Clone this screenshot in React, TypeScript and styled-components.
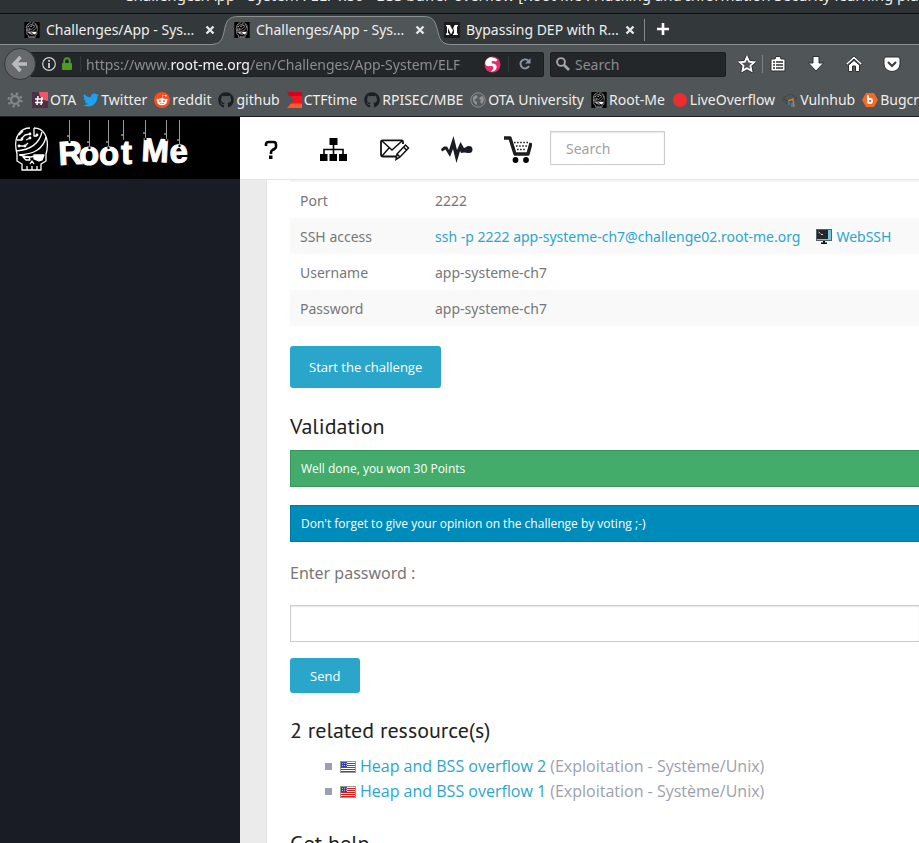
import React from "react";
import styled, { createGlobalStyle, css } from "styled-components";
import { FaTwitter, FaGithub, FaRedditAlien } from "react-icons/fa";

const GlobalStyle = createGlobalStyle`
  * { box-sizing: border-box; }
  html, body { margin: 0; }
  body { font-family: "Open Sans", "Noto Sans", sans-serif; background: #fff; }
  svg { display: block; flex: none; }
  button, input { font: inherit; margin: 0; }
  a { text-decoration: none; }
`;

const Window = styled.div`
  display: flex;
  flex-direction: column;
  height: 100vh;
  overflow: hidden;
`;

const Chrome = styled.header`
  flex: none;
  font-family: "Noto Sans", sans-serif;
  font-size: 14px;
  color: #eeeeec;
  background: #505557;
  border-bottom: 1px solid #1c2022;
`;

const TitleBar = styled.div`
  display: flex;
  align-items: flex-end;
  height: 14px;
  padding-left: 124px;
  overflow: hidden;
  white-space: nowrap;
  font-size: 15px;
  line-height: 36px;
  background: #2d3235;
  border-bottom: 1px solid #0d0f10;
`;

const TabStrip = styled.div`
  display: flex;
  height: 31px;
  padding-left: 15px;
  background: #33393b;
  border-bottom: 1px solid #8b9090;
`;

const Tab = styled.div<{ $active?: boolean; $divider?: boolean }>`
  position: relative;
  display: flex;
  align-items: center;
  gap: 6px;
  width: 210px;
  height: 31px;
  padding: 0 10px 0 9px;
  ${(p) => p.$active && css`z-index: 1;`}
  ${(p) =>
    p.$divider &&
    css`
      &::after {
        content: "";
        position: absolute;
        right: 0;
        top: 5px;
        height: 22px;
        width: 1px;
        background: #85898a;
      }
    `}
`;

const TabShape = styled.svg`
  position: absolute;
  left: -14px;
  top: 0;
  z-index: -1;
`;

const TabLabel = styled.span`
  flex: 1;
  overflow: hidden;
  white-space: nowrap;
`;

const IconButton = styled.button`
  display: flex;
  align-items: center;
  justify-content: center;
  padding: 0;
  border: 0;
  background: none;
  color: inherit;
`;

const NewTab = styled(IconButton)`
  width: 36px;
`;

const NavBar = styled.div`
  display: flex;
  align-items: center;
  height: 38px;
  padding: 0 18px 0 4px;
`;

const BackButton = styled(IconButton)`
  position: relative;
  z-index: 1;
  width: 32px;
  height: 32px;
  margin-right: -6px;
  border-radius: 50%;
  background: #666a6c;
  border: 1px solid #33383a;
  flex: none;
`;

const Field = styled.div`
  display: flex;
  align-items: center;
  height: 25px;
  background: #23272a;
  border: 1px solid #1b1e20;
  border-radius: 2px;
`;

const UrlField = styled(Field)`
  flex: 1;
  min-width: 0;
  padding: 0 11px;
  gap: 5px;
`;

const UrlText = styled.div`
  flex: 1;
  min-width: 0;
  overflow: hidden;
  white-space: nowrap;
  color: #8b8d8e;
  margin-right: 17px;
  mask-image: linear-gradient(to right, #000 calc(100% - 4px), transparent);

  strong {
    font-weight: 400;
    color: #f4f4f4;
  }
`;

const FieldDivider = styled.span`
  width: 1px;
  height: 16px;
  background: #34393b;
  margin: 0 0 0 2px;
`;

const ReloadButton = styled(IconButton)`
  margin-left: 4px;
`;

const BrowserSearch = styled(Field)`
  width: 176px;
  margin: 0 12px 0 6px;
  padding-left: 5px;
  gap: 5px;

  input {
    width: 100%;
    min-width: 0;
    padding: 0;
    border: 0;
    outline: 0;
    background: none;
    color: #eee;
  }
  input::placeholder {
    color: #8b8d8e;
    opacity: 1;
  }
`;

const Tools = styled.div`
  display: flex;
  align-items: center;
  gap: 20px;
`;

const StarGroup = styled.div`
  display: flex;
  align-items: center;
  gap: 6px;
`;

const ToolDivider = styled.span`
  width: 1px;
  height: 18px;
  background: #7f8384;
`;

const Bookmarks = styled.nav`
  display: flex;
  align-items: center;
  gap: 7px;
  height: 33px;
  padding-left: 7px;
  overflow: hidden;
`;

const BookmarksMenu = styled(IconButton)`
  margin-right: 2px;
`;

const Bookmark = styled.a`
  display: flex;
  align-items: center;
  gap: 2px;
  flex: none;
  color: #eeeeec;
  white-space: nowrap;
`;

const Page = styled.div`
  display: flex;
  flex: 1;
  min-height: 0;
`;

const Sidebar = styled.aside`
  flex: none;
  width: 240px;
  background: #191c25;
`;

const LogoLink = styled.a`
  display: block;
  height: 62px;
  background: #000;
`;

const Main = styled.div`
  display: flex;
  flex-direction: column;
  flex: 1;
  min-width: 0;
`;

const SiteHeader = styled.div`
  display: flex;
  align-items: center;
  flex: none;
  height: 63px;
  padding-left: 12px;
  background: #fff;
  border-bottom: 1px solid #e4e4e4;
`;

const SiteLink = styled.a<{ $width: number }>`
  display: flex;
  justify-content: center;
  align-items: center;
  width: ${(p) => p.$width}px;
  height: 36px;
  margin-top: 3px;
`;

const SiteSearch = styled.input`
  width: 115px;
  height: 34px;
  margin-left: 14px;
  padding: 0 15px;
  font-family: "Noto Sans", sans-serif;
  font-size: 14px;
  border: 1px solid #ccc;
  box-shadow: inset 0 1px 2px rgba(0, 0, 0, 0.1);
  background: #fff;

  &::placeholder {
    color: #a2a2a2;
    opacity: 1;
  }
`;

const Body = styled.main`
  flex: 1;
  min-height: 0;
  border-left: 26px solid #ebebeb;
  overflow: hidden;
`;

const Content = styled.div`
  padding-left: 23px;
  border-left: 1px solid #e2e2e2;
`;

const InfoTable = styled.table`
  width: 100%;
  border-collapse: separate;
  border-spacing: 0;
  border-top: 2px solid #f5f5f5;
  font-family: "Noto Sans", sans-serif;
  font-size: 14px;
  color: #777;

  tr:nth-child(even) {
    background: #f9f9f9;
  }
  th,
  td {
    height: 36px;
    padding: 0 10px;
    text-align: left;
    font-weight: 400;
    white-space: nowrap;
  }
  th {
    width: 135px;
  }
`;

const CellLinks = styled.div`
  display: flex;
  align-items: center;
  gap: 16px;
`;

const Link = styled.a`
  display: inline-flex;
  align-items: center;
  gap: 4px;
  color: #2ba6cb;
`;

const Button = styled.button<{ $large?: boolean }>`
  display: block;
  height: ${(p) => (p.$large ? 42 : 35)}px;
  margin: ${(p) => (p.$large ? "20px 0 23px" : "16px 0 0")};
  padding: 0 ${(p) => (p.$large ? 19 : 20)}px;
  border: 0;
  border-radius: 3px;
  background: #2ba6cb;
  color: #fff;
  font-size: 13px;
`;

const Heading = styled.h3`
  margin: 22px 0 9px;
  font-family: "PT Sans", "Noto Sans", sans-serif;
  font-size: 22px;
  line-height: 30px;
  font-weight: 400;
  color: #222;
`;

const Alert = styled.div<{ $tone: "success" | "info" }>`
  height: 37px;
  margin-bottom: 18px;
  padding: 0 10px;
  font-size: 12px;
  line-height: 35px;
  color: #fff;
  background: ${(p) => (p.$tone === "success" ? "#43ac6a" : "#008cba")};
  border: 1px solid ${(p) => (p.$tone === "success" ? "#3a945b" : "#0078a0")};
  border-right: 0;
`;

const PasswordLabel = styled.label`
  display: block;
  padding-top: 1px;
  margin-bottom: 19px;
  font-family: "Noto Sans", sans-serif;
  font-size: 16px;
  line-height: 25px;
  color: #777;
`;

const PasswordInput = styled.input`
  display: block;
  width: 100%;
  height: 37px;
  padding: 0 8px;
  border: 1px solid #ccc;
  border-right: 0;
  box-shadow: inset 0 1px 2px rgba(0, 0, 0, 0.1);
`;

const Resources = styled.ul`
  margin: 0 0 24px;
  padding: 0 0 0 35px;
  list-style: none;
  font-size: 16px;
  line-height: 25px;
  color: #9c9fae;

  li {
    display: flex;
    align-items: center;
    gap: 4px;
    white-space: nowrap;
  }
  li::before {
    content: "";
    width: 7px;
    height: 7px;
    margin-right: 4px;
    background: #9c9fb0;
  }
`;

const SkullArt = () => (
  <g fill="none" stroke="#fff" strokeWidth="1.3" strokeLinejoin="round">
    <path d="M15 1C6 1-1 9 1 22l1 5v7l5 3v6h19v-6l5-3v-7l1-4C34 9 28 1 19 1" />
    <path d="M1 24C14 23 24 18 27 5M4 28C18 27 28 23 31 10" />
    <path d="M4 8l4-4M15 7l-5 1-3 3M4 19h6M11 13l4-2M10 19l3-3M19 1v8h3M2 13h5" />
    <path d="M5 28l7 2h4l4-1h8" strokeWidth="1.600" />
    <path d="M19 28h10l-2 5-3 1-5-2z" fill="#fff" />
    <path d="M8 30h6l1 3h-4z" />
    <path d="M15 37l2-3 2 3M12 43v-4M17 43v-4M22 43v-4" />
    <g fill="#fff" stroke="none">
      <circle cx="15" cy="7" r="1.400" />
      <circle cx="7" cy="12" r="1.400" />
      <circle cx="4" cy="19" r="1.400" />
      <circle cx="10" cy="19" r="1.400" />
      <circle cx="15" cy="11" r="1.400" />
      <circle cx="22" cy="8" r="1.400" />
    </g>
  </g>
);

const SkullIcon = () => (
  <svg width="16" height="16" viewBox="-5 -1 44 46" aria-hidden="true">
    <rect x="-5" y="-1" width="44" height="46" />
    <SkullArt />
  </svg>
);

const letters = [
  { ch: "R", x: 59, y: 48, r: -3, sx: 69, sy: 25 },
  { ch: "o", x: 79, y: 48, r: 0, sx: 89, sy: 31 },
  { ch: "o", x: 99, y: 48, r: 0, sx: 108, sy: 31 },
  { ch: "t", x: 121, y: 47, r: 0, sx: 123, sy: 24 },
  { ch: "M", x: 141, y: 44, r: 3, sx: 145, sy: 22 },
  { ch: "", x: 0, y: 0, r: 0, sx: 166, sy: 23 },
  { ch: "e", x: 170, y: 46, r: -3, sx: 179, sy: 29 },
];

const Logo = () => (
  <svg width="240" height="62" viewBox="0 0 240 62" role="img" aria-label="Root Me">
    <g transform="translate(15 10)"><SkullArt /></g>
    <g fill="#fff" stroke="#fff" fontFamily="Liberation Sans, sans-serif" fontWeight="700" fontSize="33">
      {letters.map((l, i) => (
        <g key={i}>
          <text x={l.x} y={l.y} strokeWidth="1" transform={`rotate(${l.r} ${l.x} ${l.y})`}>{l.ch}</text>
          <path d={`M${l.sx + 0.5} 3V${l.sy}`} stroke="#999" strokeWidth="1" />
          <circle cx={l.sx + 0.5} cy={l.sy} r="1.200" fill="#000" stroke="none" />
          <circle cx={l.sx - 1} cy={l.sy - 6} r="0.900" fill="#aaa" stroke="none" />
        </g>
      ))}
    </g>
  </svg>
);

const CloseIcon = () => (
  <svg width="10" height="10" viewBox="0 0 10 10" stroke="#e6e6e4" strokeWidth="2.400">
    <path d="M1.500 1.500l7 7M8.500 1.500l-7 7" />
  </svg>
);

const MediumIcon = () => (
  <svg width="16" height="16" viewBox="0 0 16 16">
    <rect width="16" height="16" fill="#1b1b1b" />
    <path fill="#fff" d="M2 3h4l2.400 5L10.700 3H14v1l-1 .7v6.600l1 .7v1H9v-1l1-.7V6L7.400 12h-.6L4 6v4.800L5.200 12v1H2v-1l1-1.200V4.800L2 4z" />
  </svg>
);

const BackIcon = () => (
  <svg width="18" height="18" viewBox="0 0 18 18" fill="none" stroke="#b9bbbc" strokeWidth="3.400">
    <path d="M9.500 2L3 9l6.500 7M3.500 9H16" />
  </svg>
);

const InfoIcon = () => (
  <svg width="14" height="14" viewBox="0 0 14 14" fill="none" stroke="#cfd0d0">
    <circle cx="7" cy="7" r="6.300" strokeWidth="1.200" />
    <path d="M7 6v5M7 3v1.800" strokeWidth="1.800" />
  </svg>
);

const LockIcon = () => (
  <svg width="12" height="14" viewBox="0 0 12 14">
    <path d="M3.200 7V4a2.800 2.800 0 0 1 5.600 0v3" fill="none" stroke="#4d9a26" strokeWidth="1.900" />
    <rect x="1" y="6" width="10" height="7" rx="1" fill="#4d9a26" />
  </svg>
);

const SwirlIcon = () => (
  <svg width="17" height="17" viewBox="0 0 17 17">
    <circle cx="8.500" cy="8.500" r="8" fill="#ea2a6a" />
    <path d="M10 2C6 0 1.500 3 1.200 7c0 3 2.800 3.500 5.300 3 2.500-.4 3.500 1 2.500 3-.6 1.300-1.300 2-2 2.600 2 .4 4.500-.8 5.300-3C13.500 9.500 11.500 8 9 7.600 7 7.300 7 5 9.500 5L12 5.500 13.500 4C13 3 11.500 2 10 2z" fill="#fff" />
  </svg>
);

const ReloadIcon = () => (
  <svg width="14" height="14" viewBox="0 0 14 14">
    <path d="M10 3.500A4.500 4.500 0 1 0 11 9" fill="none" stroke="#8a98a6" strokeWidth="1.900" />
    <path d="M12.500 1v5.500H7z" fill="#8a98a6" />
  </svg>
);

const MagnifierIcon = () => (
  <svg width="14" height="14" viewBox="0 0 14 14" fill="none" stroke="#a6a7a8">
    <circle cx="5" cy="5" r="3.900" strokeWidth="1.900" />
    <path d="M8 8l5 5" strokeWidth="2.600" />
  </svg>
);

const starPath = "M9 2l2.100 4.700 5 .6-3.700 3.400 1 5L9 13.200l-4.500 2.500 1-5L1.900 7.300l5-.6z";

const StarIcon = () => (
  <svg width="18" height="18" viewBox="0 0 18 18">
    <path d={starPath} fill="none" stroke="#2b3032" strokeWidth="3.600" />
    <path d={starPath} fill="#505557" stroke="#fff" strokeWidth="1.800" />
  </svg>
);

const ClipboardIcon = () => (
  <svg width="18" height="18" viewBox="0 0 18 18">
    <path d="M2 4h4l1-2.500h4L12 4h4v12H2z" fill="#fff" stroke="#2b3032" strokeWidth="1" />
    <path d="M4 7h2M7 7h7M4 10h2M7 10h7M4 13h2M7 13h7" stroke="#2b3032" strokeWidth="1.500" />
  </svg>
);

const DownloadIcon = () => (
  <svg width="18" height="18" viewBox="0 0 18 18">
    <path d="M6 1.500h6V8h4.500L9 16 1.500 8H6z" fill="#fff" stroke="#2b3032" />
  </svg>
);

const HomeIcon = () => (
  <svg width="18" height="18" viewBox="0 0 18 18" fill="#fff" stroke="#2b3032">
    <path d="M9 1l8.200 7.500-1.400 1.700L9 4 2.200 10.200.8 8.500z" />
    <path d="M3.500 10.200L9 5.400l5.500 4.800V16.500h-4V11h-3v5.500h-4z" />
  </svg>
);

const PocketIcon = () => (
  <svg width="18" height="18" viewBox="0 0 18 18">
    <path d="M1 4a2 2 0 0 1 2-2h12a2 2 0 0 1 2 2v5a8 7.500 0 0 1-16 0z" fill="#fff" stroke="#2b3032" />
    <path d="M5 7l4 4 4-4" fill="none" stroke="#3a4042" strokeWidth="2.200" />
  </svg>
);

const GearIcon = () => (
  <svg width="16" height="16" viewBox="0 0 17 17" fill="none" stroke="#84888a">
    <circle cx="8.500" cy="8.500" r="4.200" strokeWidth="2.400" />
    <circle cx="8.500" cy="8.500" r="6.700" strokeWidth="2.600" strokeDasharray="2.400 2.862" />
  </svg>
);

const OtaIcon = () => (
  <svg width="16" height="16" viewBox="0 0 16 16">
    <rect width="16" height="16" fill="#4b3047" />
    <path d="M7 0h9v9C11 9 7 5 7 0z" fill="#f15666" />
    <path d="M6 4L5 13M10 5L9 13M3 7h8M3 10.500h8" stroke="#fff" strokeWidth="1.500" />
  </svg>
);

const RedditIcon = () => (
  <svg width="16" height="16" viewBox="0 0 16 16">
    <circle cx="8" cy="8" r="8" fill="#fd4a1c" />
    <FaRedditAlien x="2" y="2" size={12} color="#fff" />
  </svg>
);

const CtfIcon = () => (
  <svg width="15" height="16" viewBox="0 0 15 16">
    <path d="M0 0h15v16H0l7-8z" fill="#fb1420" />
    <path d="M0 0h15v4H2z" fill="#d6001a" />
    <path d="M4 11.500L0 16h15v-4.500z" fill="#ff5a2b" />
  </svg>
);

const GlobeIcon = () => (
  <svg width="16" height="16" viewBox="0 0 16 16">
    <circle cx="8" cy="8" r="7.200" fill="#565b5c" stroke="#8b8e8f" />
    <path d="M3 5l3-2 2 2-2 2-2 1 3 2v3L5 12 3 9zM10 5l3-1 1 4-2 4-2-2 1-2-2-1z" fill="#8f9293" />
  </svg>
);

const DotIcon = () => (
  <svg width="16" height="16" viewBox="0 0 16 16"><circle cx="8" cy="8" r="7" fill="#ee2e2e" /></svg>
);

const VulnhubIcon = () => (
  <svg width="16" height="16" viewBox="0 0 16 16" fill="none">
    <path d="M1 6l7-4 7 4-7 4zM1 6v3l7 4M3 8l5 3" stroke="#42474a" />
    <path d="M6 9l5-2 1 8" stroke="#c98238" strokeWidth="1.400" />
    <path d="M7 10v3M10 11v4" stroke="#3a90b8" strokeWidth="1.400" />
  </svg>
);

const BugcrowdIcon = () => (
  <svg width="16" height="16" viewBox="0 0 16 16">
    <path d="M4 1h8l4 7-4 7H4L0 8z" fill="#f26a24" />
    <path d="M6 3.500v8" stroke="#fff" strokeWidth="1.900" />
    <circle cx="8" cy="9" r="2.100" fill="none" stroke="#fff" strokeWidth="1.800" />
  </svg>
);

const QuestionIcon = () => (
  <svg width="14" height="20" viewBox="0 0 14 20">
    <path d="M2 6V4.500Q2 2 4.500 2h5Q12 2 12 4.500v2Q12 8 10.500 9L8.500 10Q7 11 7 12.500V14" fill="none" stroke="#000" strokeWidth="2.600" />
    <rect x="5" y="15.500" width="3.500" height="3.500" />
  </svg>
);

const SitemapIcon = () => (
  <svg width="27" height="23" viewBox="0 0 27 23">
    <path d="M9.500 0h8v7h-8zM0 16h7.500v7H0zM9.500 16H17v7H9.500zM19 16h8v7h-8z" />
    <path d="M13.500 6v10M4 17v-5.500h19V17" fill="none" stroke="#000" strokeWidth="1.600" />
  </svg>
);

const MailIcon = () => (
  <svg width="30" height="22" viewBox="0 0 30 22" fill="none" stroke="#111" strokeWidth="1.500">
    <path d="M16 17.500H3Q1 17.500 1 15.500V3Q1 1.300 3 1.300h18.500Q23 1.300 23 3v2" strokeWidth="1.800" />
    <path d="M2 2l10 9L22 2M2 17l7-8" />
    <path d="M17 15L25.500 6l3 3L20 18l-4 2.500zM17 15l3 3M23.500 8l3 3" />
  </svg>
);

const PulseIcon = () => (
  <svg width="32" height="27" viewBox="0 0 32 27" fill="#191c25">
    <path d="M0 13L3 10.500H6L8 14 12.500 0 16 14 19.500 6 23 12 28 10V17L23 16.500 20 17 19 15 15.500 27 12 13 9 21 4.500 13.500 1 15.500z" />
    <circle cx="28" cy="13.500" r="3.500" />
  </svg>
);

const CartIcon = () => (
  <svg width="28" height="27" viewBox="0 0 28 27">
    <path d="M0 2h6l5 16h13L27 7" fill="none" stroke="#1d1d1d" strokeWidth="3.400" strokeLinejoin="round" />
    <path d="M10 6.500h15M12 10h11M13 13.500h8" stroke="#222" strokeWidth="1.600" strokeDasharray="1.600 1.500" />
    <circle cx="11.500" cy="24" r="2.900" /><circle cx="22" cy="24" r="2.900" />
  </svg>
);

const MonitorIcon = () => (
  <svg width="16" height="15" viewBox="0 0 16 15">
    <rect width="16" height="12" fill="#556169" />
    <rect x="1" y="1" width="14" height="10" fill="#79c9dd" />
    <rect x="1" y="1" width="11" height="9" fill="#22282b" />
    <path d="M2.500 3l2 1.500M5 5.500h2" stroke="#ddd" />
    <path d="M7 12h2v1.500h2V15H5v-1.500h2z" fill="#111" />
  </svg>
);

const FlagIcon = () => (
  <svg width="16" height="13" viewBox="0 0 16 13">
    <rect y="1" width="16" height="12" fill="#989898" />
    <rect x="1" y="2" width="14" height="10" fill="#fff" />
    <path d="M1 3.500h14M1 5.500h14M1 7.500h14M1 9.500h14M1 11.500h14" stroke="#e01a1a" strokeWidth="1" />
    <rect x="1" y="2" width="6" height="5" fill="#3543ac" />
    <path d="M2 3.500h5M2 5.500h5" stroke="#aab0e0" strokeDasharray="1 1" />
  </svg>
);

const bookmarks = [
  { label: "OTA", icon: <OtaIcon /> },
  { label: "Twitter", icon: <FaTwitter size={16} color="#1da1f2" /> },
  { label: "reddit", icon: <RedditIcon /> },
  { label: "github", icon: <FaGithub size={16} color="#1b1f23" /> },
  { label: "CTFtime", icon: <CtfIcon /> },
  { label: "RPISEC/MBE", icon: <FaGithub size={16} color="#1b1f23" /> },
  { label: "OTA University", icon: <GlobeIcon /> },
  { label: "Root-Me", icon: <SkullIcon /> },
  { label: "LiveOverflow", icon: <DotIcon /> },
  { label: "Vulnhub", icon: <VulnhubIcon /> },
  { label: "Bugcrowd", icon: <BugcrowdIcon /> },
];

const siteLinks = [
  { label: "Help", width: 38, icon: <QuestionIcon /> },
  { label: "Site map", width: 86, icon: <SitemapIcon /> },
  { label: "Contact", width: 38, icon: <MailIcon /> },
  { label: "Activity", width: 86, icon: <PulseIcon /> },
  { label: "Shop", width: 36, icon: <CartIcon /> },
];

const BrowserChrome = () => (
  <Chrome>
    <TitleBar>Challenges/App - System : ELF x86 - BSS buffer overflow [Root Me : Hacking and Information Security learning platform]</TitleBar>
    <TabStrip>
      <Tab>
        <SkullIcon />
        <TabLabel>Challenges/App - Sys...</TabLabel>
        <IconButton aria-label="Close tab"><CloseIcon /></IconButton>
      </Tab>
      <Tab $active>
        <TabShape width="244" height="31" viewBox="0 0 244 31">
          <path d="M0 30.500C9 30 11 27 13 18 15 7 17 2.500 28 2.500H212C223 2.500 224 7 227 18 229 28 233 30.500 241 30.500V31H0z" fill="#505557" />
          <path d="M0 30.500C9 30 11 27 13 18 15 7 17 2.500 28 2.500H212C223 2.500 224 7 227 18 229 28 233 30.500 241 30.500" fill="none" stroke="#8b9090" />
        </TabShape>
        <SkullIcon />
        <TabLabel>Challenges/App - Sys...</TabLabel>
        <IconButton aria-label="Close tab"><CloseIcon /></IconButton>
      </Tab>
      <Tab $divider>
        <MediumIcon />
        <TabLabel>Bypassing DEP with R...</TabLabel>
        <IconButton aria-label="Close tab"><CloseIcon /></IconButton>
      </Tab>
      <NewTab aria-label="New tab">
        <svg width="14" height="14" viewBox="0 0 14 14" stroke="#fff" strokeWidth="2.600"><path d="M7 1v12M1 7h12" /></svg>
      </NewTab>
    </TabStrip>
    <NavBar>
      <BackButton aria-label="Back"><BackIcon /></BackButton>
      <UrlField>
        <InfoIcon />
        <LockIcon />
        <FieldDivider />
        <UrlText role="textbox" aria-label="Address">
          https://www.<strong>root-me.org</strong>/en/Challenges/App-System/ELF-x86-BSS-buffer-overflow
        </UrlText>
        <SwirlIcon />
        <FieldDivider />
        <ReloadButton aria-label="Reload"><ReloadIcon /></ReloadButton>
      </UrlField>
      <BrowserSearch>
        <MagnifierIcon />
        <input aria-label="Search the web" placeholder="Search" />
      </BrowserSearch>
      <Tools>
        <StarGroup>
          <IconButton aria-label="Bookmark this page"><StarIcon /></IconButton>
          <ToolDivider />
          <IconButton aria-label="Show bookmarks"><ClipboardIcon /></IconButton>
        </StarGroup>
        <IconButton aria-label="Downloads"><DownloadIcon /></IconButton>
        <IconButton aria-label="Home"><HomeIcon /></IconButton>
        <IconButton aria-label="Save to Pocket"><PocketIcon /></IconButton>
      </Tools>
    </NavBar>
    <Bookmarks>
      <BookmarksMenu aria-label="Bookmark settings"><GearIcon /></BookmarksMenu>
      {bookmarks.map((b) => (
        <Bookmark key={b.label} href="#">{b.icon}{b.label}</Bookmark>
      ))}
    </Bookmarks>
  </Chrome>
);

export default function App() {
  return (
    <>
      <GlobalStyle />
      <Window>
        <BrowserChrome />
        <Page>
          <Sidebar>
            <LogoLink href="#"><Logo /></LogoLink>
          </Sidebar>
          <Main>
            <SiteHeader>
              {siteLinks.map((l) => (
                <SiteLink key={l.label} href="#" aria-label={l.label} $width={l.width}>{l.icon}</SiteLink>
              ))}
              <SiteSearch aria-label="Search" placeholder="Search" />
            </SiteHeader>
            <Body>
              <Content>
                <InfoTable>
                  <tbody>
                    <tr><th scope="row">Port</th><td>2222</td></tr>
                    <tr>
                      <th scope="row">SSH access</th>
                      <td>
                        <CellLinks>
                          <Link href="#">ssh -p 2222 app-systeme-ch7@challenge02.root-me.org</Link>
                          <Link href="#"><MonitorIcon />WebSSH</Link>
                        </CellLinks>
                      </td>
                    </tr>
                    <tr><th scope="row">Username</th><td>app-systeme-ch7</td></tr>
                    <tr><th scope="row">Password</th><td>app-systeme-ch7</td></tr>
                  </tbody>
                </InfoTable>
                <Button $large>Start the challenge</Button>
                <Heading>Validation</Heading>
                <Alert $tone="success">Well done, you won 30 Points</Alert>
                <Alert $tone="info">Don't forget to give your opinion on the challenge by voting ;-)</Alert>
                <PasswordLabel htmlFor="password">Enter password :</PasswordLabel>
                <PasswordInput id="password" />
                <Button>Send</Button>
                <Heading>2 related ressource(s)</Heading>
                <Resources>
                  <li><FlagIcon /><Link href="#">Heap and BSS overflow 2</Link> (Exploitation - Système/Unix)</li>
                  <li><FlagIcon /><Link href="#">Heap and BSS overflow 1</Link> (Exploitation - Système/Unix)</li>
                </Resources>
                <Heading>Get help</Heading>
              </Content>
            </Body>
          </Main>
        </Page>
      </Window>
    </>
  );
}
